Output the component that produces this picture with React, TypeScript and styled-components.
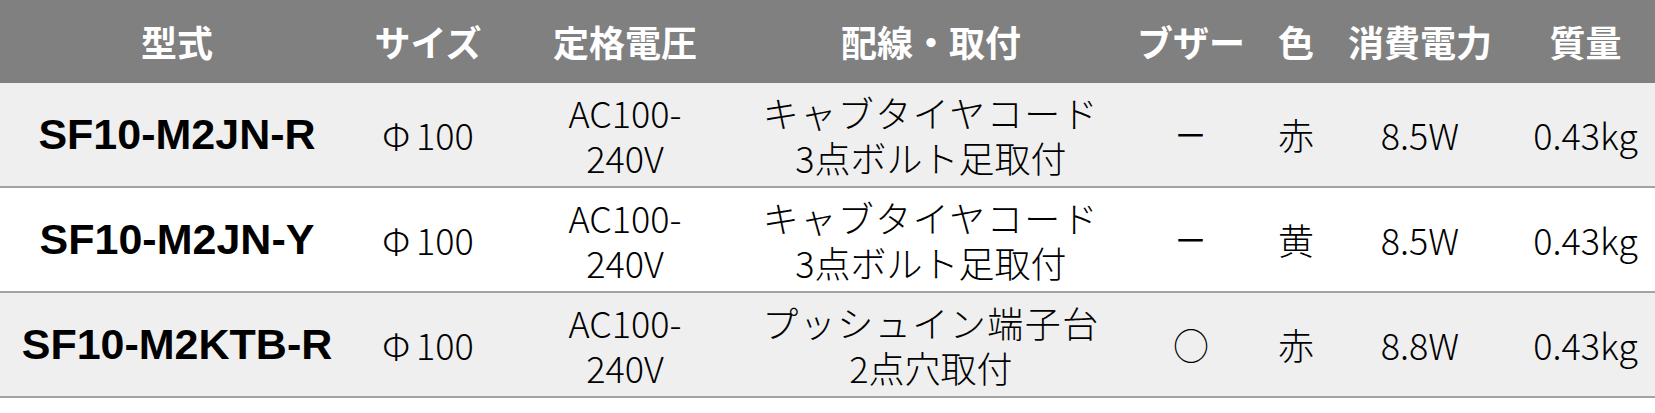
import { createGlobalStyle, styled } from 'styled-components';

const GlobalStyle = createGlobalStyle`
  body {
    margin: 0;
    background: #ffffff;
  }
`;

const COLUMNS = '354px 148px 246px 366px 154px 56px 192px 139px';

const Table = styled.div`
  width: 1655px;
  display: flex;
  flex-direction: column;
  font-family: 'Noto Sans CJK JP', 'Noto Sans', sans-serif;
  color: #000000;
`;

const HeaderRow = styled.div`
  display: grid;
  grid-template-columns: ${COLUMNS};
  height: 83px;
  background-color: #808080;
`;

const HeaderCell = styled.div`
  display: flex;
  align-items: center;
  justify-content: center;
  color: #ffffff;
  font-size: 36px;
  font-weight: 700;
  white-space: nowrap;
  padding-bottom: 2px;
`;

const Row = styled.div<{ $shaded: boolean }>`
  display: grid;
  grid-template-columns: ${COLUMNS};
  height: 103px;
  background-color: ${({ $shaded }) => ($shaded ? '#efefef' : '#ffffff')};
  border-bottom: 2px solid #a3a3a3;
`;

const Cell = styled.div`
  display: flex;
  flex-direction: column;
  align-items: center;
  justify-content: center;
  font-size: 36px;
  font-weight: 300;
  line-height: 45px;
  white-space: nowrap;
  text-align: center;
`;

const ModelCell = styled(Cell)`
  font-family: 'Liberation Sans', Arial, sans-serif;
  font-size: 43px;
  font-weight: 700;
`;

const Line = styled.span<{ $spaced?: boolean }>`
  display: block;
  height: 45px;
  letter-spacing: ${({ $spaced }) => ($spaced ? '1.5px' : '0')};
`;

const Phi = styled.span`
  margin-right: 6px;
`;

const Dash = styled.span`
  display: inline-block;
  font-family: 'Liberation Sans', Arial, sans-serif;
  font-size: 36px;
  font-weight: 400;
  transform: scaleX(1.4);
`;

interface Product {
  model: string;
  wiring: string;
  mount: string;
  buzzer: string;
  color: string;
  power: string;
  weight: string;
}

const headers = ['型式', 'サイズ', '定格電圧', '配線・取付', 'ブザー', '色', '消費電力', '質量'];

const products: Product[] = [
  {
    model: 'SF10-M2JN-R',
    wiring: 'キャブタイヤコード',
    mount: '3点ボルト足取付',
    buzzer: '−',
    color: '赤',
    power: '8.5W',
    weight: '0.43kg',
  },
  {
    model: 'SF10-M2JN-Y',
    wiring: 'キャブタイヤコード',
    mount: '3点ボルト足取付',
    buzzer: '−',
    color: '黄',
    power: '8.5W',
    weight: '0.43kg',
  },
  {
    model: 'SF10-M2KTB-R',
    wiring: 'プッシュイン端子台',
    mount: '2点穴取付',
    buzzer: '○',
    color: '赤',
    power: '8.8W',
    weight: '0.43kg',
  },
];

export default function App() {
  return (
    <>
      <GlobalStyle />
      <Table>
        <HeaderRow>
          {headers.map((h) => (
            <HeaderCell key={h}>{h}</HeaderCell>
          ))}
        </HeaderRow>
        {products.map((p, i) => (
          <Row key={p.model} $shaded={i % 2 === 0}>
            <ModelCell>{p.model}</ModelCell>
            <Cell>
              <span>
                <Phi>Φ</Phi>100
              </span>
            </Cell>
            <Cell>
              <Line>AC100-</Line>
              <Line>240V</Line>
            </Cell>
            <Cell>
              <Line $spaced>{p.wiring}</Line>
              <Line>{p.mount}</Line>
            </Cell>
            <Cell>
              {p.buzzer === '−' ? <Dash>{p.buzzer}</Dash> : <span>{p.buzzer}</span>}
            </Cell>
            <Cell>{p.color}</Cell>
            <Cell>{p.power}</Cell>
            <Cell>{p.weight}</Cell>
          </Row>
        ))}
      </Table>
    </>
  );
}
